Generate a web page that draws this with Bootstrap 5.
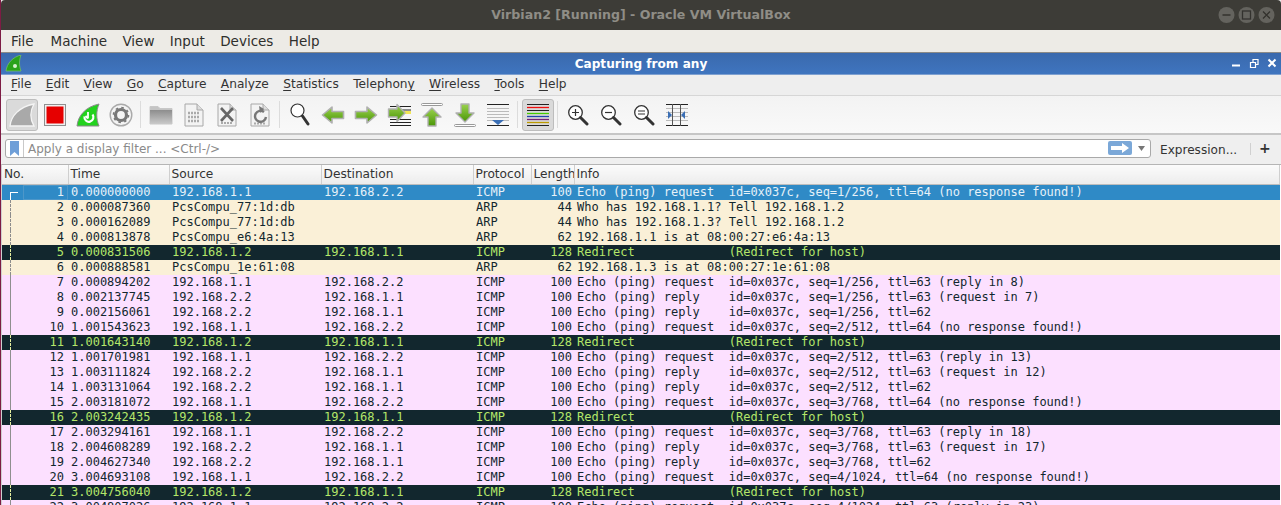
<!DOCTYPE html>
<html lang="en"><head><meta charset="utf-8"><title>Wireshark</title>
<link rel="stylesheet" href="https://cdn.jsdelivr.net/npm/bootstrap@5.3.0/dist/css/bootstrap.min.css">
<style>
html,body{height:505px;overflow:hidden}
body{background:#7d1c44;padding-left:1px;font-family:"DejaVu Sans",sans-serif;color:#2e2e2e}
.vb-frame{height:505px;background:#efefef;overflow:hidden}
.vb-title{height:30px;background:#3d3c37;color:#8f8d86;font-size:12.6px;font-weight:700;position:relative;border-radius:4px 4px 0 0}
.vb-ctrls{position:absolute;right:3px;top:7px}
.vb-menu{height:22px;background:#edebe6;font-size:13.5px;color:#2f2f2c;padding-left:10px;gap:15.400px;line-height:22px}
.vb-menu span:first-child{margin-right:1.500px}
.ws-title{height:23px;border-top:1px solid #8b8a87;background:linear-gradient(#3a69ad,#3f75bf);color:#fff;font-size:12.1px;font-weight:700;position:relative;padding-top:2px;border-bottom:1px solid #7ea0d0}
.ws-logo{position:absolute;left:4px;top:2px}
.ws-ctrls{position:absolute;right:3px;top:2px}
.ws-menu{height:20px;background:#eeeeee;font-size:12.2px;color:#333;padding-left:10px;gap:14.300px;line-height:19px}
.ws-menu u{text-underline-offset:2px;text-decoration-thickness:1px}
.ws-tools{height:40px;background:linear-gradient(#f3f3f3,#f9f9f9);border-top:1px solid #d6d6d6;border-bottom:2px solid #c6c6c6;padding:3px 0 2px 4px}
.tool{width:32px;height:32px;margin-left:1px;flex:none;border-radius:3px;border:1px solid transparent}
.tool.on{background:#dadada;border-color:#bdbdbd}
.tsep{width:7px;flex:none;height:31px;position:relative}
.tsep::after{content:"";position:absolute;left:3px;top:2px;bottom:2px;width:1px;background:#dcdcdc}
.ws-filter{height:29px;background:#efefef;padding:4px 0 3px 4px}
.fbox{width:1146px;height:19px;background:#fff;border:1px solid #a9a9a9;border-radius:3px;position:relative;font-size:12px;color:#8a8a8a;line-height:18px}
.fbk{width:18px;height:17px;border-right:1px solid #c9c9c9;flex:none}
.ftext{padding-left:4px;flex:1 1 auto}
.fgo{width:24px;height:14px;background:#7ba8d8;border-radius:2px;margin-top:1px;flex:none}
.fdd{width:18px;flex:none}
.fexpr{font-size:12.1px;color:#333;margin-left:9px;width:90px;line-height:22px}
.fsep{width:1px;height:12px;background:#d0d0d0;margin-top:4px}
.fplus{font-size:14px;font-weight:700;margin-left:8px;color:#333;line-height:18px}
.pkt-wrap{border-top:1px solid #b5b5b5;border-left:1px solid #cfcfcf;background:#fff}
.pkt{border-collapse:collapse;table-layout:fixed;width:1278px}
.pkt th{height:19px;padding:1px 0 0 2px;font-weight:400;font-size:12.2px;color:#333;background:linear-gradient(#fbfbfb,#ececec);border-right:1px solid #cfcfcf;border-bottom:1px solid #bdbdbd;white-space:nowrap;overflow:hidden;line-height:17px}
.pkt td{height:15px;padding:0 0 0 3px;font-family:"DejaVu Sans Mono",monospace;font-size:12px;line-height:15px;white-space:pre;overflow:hidden;color:#12272e}
.pkt td.num{text-align:right;padding:0 2px 0 0}
.pkt td.no{padding-right:4px;position:relative}
tr.a td{background:#faf0d7}
tr.p td{background:#fce0ff}
tr.d td{background:#12272e;color:#b4e66a}
tr.s td{background:#2f8ac6;color:#e6f1f8}
.lnk{position:absolute;left:8px;top:0;bottom:0;width:0;border-left:1px dashed #8c8c8c}
tr.p .lnk{border-left:1px solid #8f8f8f}
tr.d .lnk{border-left:1px dashed #e6f0a0}
.lnk1{position:absolute;left:8px;top:7px;bottom:0;width:8px;border-left:1px solid #fff;border-top:1px solid #fff}
.foc{position:absolute;left:21px;right:0;top:0;bottom:0;border:1px solid #4d97c9}
</style></head>
<body>
<div class="vb-frame">
 <div class="vb-title d-flex align-items-center justify-content-center">Virbian2 [Running] - Oracle VM VirtualBox
  <svg class="vb-ctrls" width="60" height="17" viewBox="0 0 60 17"><circle cx="8.500" cy="8" r="8" fill="#64635e"/><path d="M4.500 8h8" stroke="#33322e" stroke-width="1.500"/><circle cx="28.500" cy="8" r="8" fill="#64635e"/><rect x="24.500" y="4" width="8" height="8" fill="none" stroke="#33322e" stroke-width="1.300"/><circle cx="48.500" cy="8" r="8" fill="#64635e"/><path d="M45 4.500l7 7m0-7l-7 7" stroke="#33322e" stroke-width="1.300"/></svg>
 </div>
 <div class="vb-menu d-flex"><span>File</span><span>Machine</span><span>View</span><span>Input</span><span>Devices</span><span>Help</span></div>
 <div class="ws-title text-center">
  <svg class="ws-logo" width="17" height="17" viewBox="0 0 17 17"><path d="M1 16C2 8 8 2 16 0c-2 5-2 11 0 16z" fill="#2aa31a" stroke="#7cc46c" stroke-width=".7"/><circle cx="10" cy="11" r="2" fill="#d9f2d0"/></svg>
  Capturing from any
  <svg class="ws-ctrls" width="46" height="18" viewBox="0 0 46 18"><path d="M0 10.500h8" stroke="#fff" stroke-width="2"/><path d="M18.500 7.500h5v5h-5zM21 7V4.500h5v5h-2" fill="none" stroke="#fff" stroke-width="1.200"/><path d="M36.500 4.500l7 7m0-7l-7 7" stroke="#fff" stroke-width="2"/></svg>
 </div>
 <div class="ws-menu d-flex"><span><u>F</u>ile</span><span><u>E</u>dit</span><span><u>V</u>iew</span><span><u>G</u>o</span><span><u>C</u>apture</span><span><u>A</u>nalyze</span><span><u>S</u>tatistics</span><span>Telephon<u>y</u></span><span><u>W</u>ireless</span><span><u>T</u>ools</span><span><u>H</u>elp</span></div>
 <div class="ws-tools d-flex">
  <div class="tool on d-flex align-items-center justify-content-center"><svg width="26" height="24" viewBox="0 0 26 24"><path d="M1 23C2 13 10 4 25 1c-4 7-4 15 0 22z" fill="#a9a9a9" stroke="#f4f4f4" stroke-width="1.300"/></svg></div>
  <div class="tool d-flex align-items-center justify-content-center"><svg width="22" height="22" viewBox="0 0 22 22"><rect x=".5" y=".5" width="21" height="21" fill="#f0f0f0" stroke="#8f8f8f"/><rect x="2.500" y="2.500" width="17" height="17" fill="#e60000"/></svg></div>
  <div class="tool d-flex align-items-center justify-content-center"><svg width="24" height="24" viewBox="0 0 24 24"><path d="M1 23C2 13 9 4 23 1c-3 7-3 15 0 22z" fill="#22d21e" stroke="#8a8a8a" stroke-width="1"/><path d="M8.500 13.500a4.500 4.500 0 1 0 8-2" fill="none" stroke="#fff" stroke-width="2.200"/><path d="M12 9v6.500M12 15.500l-2.500-2.500" fill="none" stroke="#fff" stroke-width="1.800"/></svg></div>
  <div class="tool d-flex align-items-center justify-content-center"><svg width="24" height="24" viewBox="0 0 24 24"><circle cx="12" cy="12" r="10.800" fill="#f4f4f4" stroke="#aaa" stroke-width="1.400"/><circle cx="12" cy="12" r="5.500" fill="none" stroke="#777" stroke-width="3.200"/><circle cx="12" cy="12" r="7.500" fill="none" stroke="#777" stroke-width="1.600" stroke-dasharray="2.500 3.400"/></svg></div>
  <div class="tsep"></div>
  <div class="tool d-flex align-items-center justify-content-center"><svg width="24" height="20" viewBox="0 0 24 20"><defs><linearGradient id="f" x1="0" y1="0" x2="0" y2="1"><stop offset="0" stop-color="#8d8d8d"/><stop offset="1" stop-color="#c9c9c9"/></linearGradient></defs><path d="M1 19V1.500h8l2 2h12V19z" fill="#c4c4c4" stroke="#c8c8c8"/><rect x="1" y="5" width="22" height="14" fill="url(#f)"/></svg></div>
  <div class="tool d-flex align-items-center justify-content-center"><svg width="20" height="24" viewBox="0 0 20 24"><path d="M1 1h12l6 6v16H1z" fill="#f3f3f3" stroke="#a8a8a8"/><path d="M13 1v6h6" fill="#ddd" stroke="#a8a8a8"/><path d="M4 10h12M4 14h12M4 18h12" stroke="#aaa" stroke-width="2.500" stroke-dasharray="2 1"/></svg></div>
  <div class="tool d-flex align-items-center justify-content-center"><svg width="20" height="24" viewBox="0 0 20 24"><path d="M1 1h12l6 6v16H1z" fill="#f3f3f3" stroke="#a8a8a8"/><path d="M13 1v6h6" fill="#ddd" stroke="#a8a8a8"/><path d="M4 20h12" stroke="#aaa" stroke-width="2" stroke-dasharray="2 1"/><path d="M4 5l12 13m0-13L4 18" stroke="#666" stroke-width="2.600"/></svg></div>
  <div class="tool d-flex align-items-center justify-content-center"><svg width="20" height="24" viewBox="0 0 20 24"><path d="M1 1h12l6 6v16H1z" fill="#f3f3f3" stroke="#a8a8a8"/><path d="M13 1v6h6" fill="#ddd" stroke="#a8a8a8"/><path d="M4 20.500h12" stroke="#aaa" stroke-width="2" stroke-dasharray="2 1"/><path d="M14 9a5.500 5.500 0 1 0 2 5" fill="none" stroke="#777" stroke-width="2.400"/><path d="M9 3l5 3-4 4z" fill="#777"/></svg></div>
  <div class="tsep"></div>
  <div class="tool d-flex align-items-center justify-content-center"><svg width="20" height="24" viewBox="0 0 20 24"><circle cx="7.500" cy="7.500" r="6.500" fill="#fff" stroke="#333" stroke-width="1.200"/><path d="M12.500 13L18 21" stroke="#333" stroke-width="3" stroke-linecap="round"/></svg></div>
  <div class="tool d-flex align-items-center justify-content-center"><svg width="24" height="20" viewBox="0 0 24 20"><defs><linearGradient id="g" x1="0" y1="0" x2="0" y2="1"><stop offset="0" stop-color="#9bd24f"/><stop offset="1" stop-color="#4a9606"/></linearGradient></defs><path d="M1.500 10l9.500-8v4.500h11.500v7H11V18z" fill="url(#g)" stroke="#b0b0b0" stroke-width="1.600" stroke-linejoin="round"/></svg></div>
  <div class="tool d-flex align-items-center justify-content-center"><svg width="24" height="20" viewBox="0 0 24 20"><path d="M22.500 10L13 2v4.500H1.500v7H13V18z" fill="url(#g)" stroke="#b0b0b0" stroke-width="1.600" stroke-linejoin="round"/></svg></div>
  <div class="tool d-flex align-items-center justify-content-center"><svg width="24" height="24" viewBox="0 0 24 24"><path d="M3 3.500h21M3 7h21M3 16.500h21M3 19.500h21M3 22.500h21" stroke="#222"/><path d="M16 9.500h8" stroke="#f3e65a" stroke-width="3"/><path d="M18 10l-8-8.500V6H1.500v8H10v4.500z" fill="url(#g)" stroke="#b0b0b0" stroke-width="1.400" stroke-linejoin="round"/></svg></div>
  <div class="tool d-flex align-items-center justify-content-center"><svg width="22" height="24" viewBox="0 0 22 24"><rect x=".5" y=".5" width="21" height="2" rx="1" fill="#fff" stroke="#999"/><path d="M11 5l9 9h-5v9H7v-9H2z" fill="url(#g)" stroke="#b0b0b0" stroke-width="1.400" stroke-linejoin="round"/></svg></div>
  <div class="tool d-flex align-items-center justify-content-center"><svg width="22" height="24" viewBox="0 0 22 24"><rect x=".5" y="21.500" width="21" height="2" rx="1" fill="#fff" stroke="#999"/><path d="M11 19l9-9h-5V1H7v9H2z" fill="url(#g)" stroke="#b0b0b0" stroke-width="1.400" stroke-linejoin="round"/></svg></div>
  <div class="tool d-flex align-items-center justify-content-center"><svg width="22" height="24" viewBox="0 0 22 24"><path d="M0 1.500h22M0 22.500h22" stroke="#222"/><path d="M0 5.500h22M0 8.500h22M0 11.500h22M0 14.500h22M0 17.500h22" stroke="#bbb"/><path d="M5 17h12l-6 5z" fill="#3b6fb5"/></svg></div>
  <div class="tsep"></div>
  <div class="tool on d-flex align-items-center justify-content-center"><svg width="22" height="24" viewBox="0 0 22 24"><path d="M0 1.500h22" stroke="#222"/><path d="M0 4.500h22" stroke="#f01010" stroke-width="1.300"/><path d="M0 7.500h22" stroke="#222"/><path d="M0 10.500h22" stroke="#44cc00" stroke-width="1.300"/><path d="M0 13.500h22" stroke="#2244aa" stroke-width="1.300"/><path d="M0 16.500h22" stroke="#772277" stroke-width="1.300"/><path d="M0 19.500h22" stroke="#bb9900" stroke-width="1.300"/><path d="M0 22.500h22" stroke="#222"/></svg></div>
  <div class="tsep"></div>
  <div class="tool d-flex align-items-center justify-content-center"><svg width="22" height="22" viewBox="0 0 22 22"><circle cx="8.500" cy="8.500" r="6.800" fill="#fff" stroke="#333" stroke-width="1.300"/><path d="M13.500 13.500L20 20" stroke="#333" stroke-width="3" stroke-linecap="round"/><path d="M5 8.500h7M8.500 5v7" stroke="#333" stroke-width="1.200"/></svg></div>
  <div class="tool d-flex align-items-center justify-content-center"><svg width="22" height="22" viewBox="0 0 22 22"><circle cx="8.500" cy="8.500" r="6.800" fill="#fff" stroke="#333" stroke-width="1.300"/><path d="M13.500 13.500L20 20" stroke="#333" stroke-width="3" stroke-linecap="round"/><path d="M5 8.500h7" stroke="#333" stroke-width="1.200"/></svg></div>
  <div class="tool d-flex align-items-center justify-content-center"><svg width="22" height="22" viewBox="0 0 22 22"><circle cx="8.500" cy="8.500" r="6.800" fill="#fff" stroke="#333" stroke-width="1.300"/><path d="M13.500 13.500L20 20" stroke="#333" stroke-width="3" stroke-linecap="round"/><path d="M5 7h7M5 10h7" stroke="#333" stroke-width="1.200"/></svg></div>
  <div class="tool d-flex align-items-center justify-content-center"><svg width="22" height="24" viewBox="0 0 22 24"><path d="M0 1.500h22M0 22.500h22" stroke="#222"/><path d="M0 5.500h22M0 9.500h22M0 13.500h22M0 17.500h22" stroke="#bbb"/><path d="M6.500 1v22M14.500 1v22" stroke="#555"/><path d="M2 8l4 4-4 4zM19 8l-4 4 4 4z" fill="#3b6fb5"/></svg></div>
 </div>
 <div class="ws-filter d-flex">
  <div class="fbox d-flex">
   <div class="fbk d-flex justify-content-center align-items-center"><svg width="9" height="15" viewBox="0 0 9 15"><path d="M0 0h9v15L4.500 11 0 15z" fill="#6f9fd8"/></svg></div>
   <div class="ftext">Apply a display filter ... &lt;Ctrl-/&gt;</div>
   <div class="fgo d-flex justify-content-center align-items-center"><svg width="18" height="10" viewBox="0 0 18 10"><path d="M0 3h11V0l7 5-7 5V7H0z" fill="#fff"/></svg></div>
   <div class="fdd d-flex justify-content-center align-items-center"><svg width="7" height="5" viewBox="0 0 7 5"><path d="M0 0h7L3.500 5z" fill="#777"/></svg></div>
  </div>
  <div class="fexpr">Expression...</div>
  <div class="fsep"></div>
  <div class="fplus">+</div>
 </div>
 <div class="pkt-wrap">
 <table class="pkt"><colgroup><col style="width:66px"><col style="width:101px"><col style="width:152px"><col style="width:152px"><col style="width:58px"><col style="width:43px"><col></colgroup>
 <thead><tr><th>No.</th><th>Time</th><th>Source</th><th>Destination</th><th>Protocol</th><th>Length</th><th>Info</th></tr></thead>
 <tbody id="rows"></tbody></table>
 </div>
</div>
<script>
const R=[
["s",1,"0.000000000","192.168.1.1","192.168.2.2","ICMP",100,"Echo (ping) request  id=0x037c, seq=1/256, ttl=64 (no response found!)"],
["a",2,"0.000087360","PcsCompu_77:1d:db","","ARP",44,"Who has 192.168.1.1? Tell 192.168.1.2"],
["a",3,"0.000162089","PcsCompu_77:1d:db","","ARP",44,"Who has 192.168.1.3? Tell 192.168.1.2"],
["a",4,"0.000813878","PcsCompu_e6:4a:13","","ARP",62,"192.168.1.1 is at 08:00:27:e6:4a:13"],
["d",5,"0.000831506","192.168.1.2","192.168.1.1","ICMP",128,"Redirect             (Redirect for host)"],
["a",6,"0.000888581","PcsCompu_1e:61:08","","ARP",62,"192.168.1.3 is at 08:00:27:1e:61:08"],
["p",7,"0.000894202","192.168.1.1","192.168.2.2","ICMP",100,"Echo (ping) request  id=0x037c, seq=1/256, ttl=63 (reply in 8)"],
["p",8,"0.002137745","192.168.2.2","192.168.1.1","ICMP",100,"Echo (ping) reply    id=0x037c, seq=1/256, ttl=63 (request in 7)"],
["p",9,"0.002156061","192.168.2.2","192.168.1.1","ICMP",100,"Echo (ping) reply    id=0x037c, seq=1/256, ttl=62"],
["p",10,"1.001543623","192.168.1.1","192.168.2.2","ICMP",100,"Echo (ping) request  id=0x037c, seq=2/512, ttl=64 (no response found!)"],
["d",11,"1.001643140","192.168.1.2","192.168.1.1","ICMP",128,"Redirect             (Redirect for host)"],
["p",12,"1.001701981","192.168.1.1","192.168.2.2","ICMP",100,"Echo (ping) request  id=0x037c, seq=2/512, ttl=63 (reply in 13)"],
["p",13,"1.003111824","192.168.2.2","192.168.1.1","ICMP",100,"Echo (ping) reply    id=0x037c, seq=2/512, ttl=63 (request in 12)"],
["p",14,"1.003131064","192.168.2.2","192.168.1.1","ICMP",100,"Echo (ping) reply    id=0x037c, seq=2/512, ttl=62"],
["p",15,"2.003181072","192.168.1.1","192.168.2.2","ICMP",100,"Echo (ping) request  id=0x037c, seq=3/768, ttl=64 (no response found!)"],
["d",16,"2.003242435","192.168.1.2","192.168.1.1","ICMP",128,"Redirect             (Redirect for host)"],
["p",17,"2.003294161","192.168.1.1","192.168.2.2","ICMP",100,"Echo (ping) request  id=0x037c, seq=3/768, ttl=63 (reply in 18)"],
["p",18,"2.004608289","192.168.2.2","192.168.1.1","ICMP",100,"Echo (ping) reply    id=0x037c, seq=3/768, ttl=63 (request in 17)"],
["p",19,"2.004627340","192.168.2.2","192.168.1.1","ICMP",100,"Echo (ping) reply    id=0x037c, seq=3/768, ttl=62"],
["p",20,"3.004693108","192.168.1.1","192.168.2.2","ICMP",100,"Echo (ping) request  id=0x037c, seq=4/1024, ttl=64 (no response found!)"],
["d",21,"3.004756040","192.168.1.2","192.168.1.1","ICMP",128,"Redirect             (Redirect for host)"],
["p",22,"3.004807026","192.168.1.1","192.168.2.2","ICMP",100,"Echo (ping) request  id=0x037c, seq=4/1024, ttl=63 (reply in 23)"]];
document.getElementById("rows").innerHTML=R.map(r=>`<tr class="${r[0]}"><td class="num no">${r[1]==1?'<i class="lnk1"></i><i class="foc"></i>':'<i class="lnk"></i>'}${r[1]}</td><td>${r[2]}</td><td>${r[3]}</td><td>${r[4]}</td><td>${r[5]}</td><td class="num">${r[6]}</td><td>${r[7]}</td></tr>`).join("");
</script>
<script src="https://cdn.jsdelivr.net/npm/bootstrap@5.3.0/dist/js/bootstrap.bundle.min.js"></script>
</body></html>
